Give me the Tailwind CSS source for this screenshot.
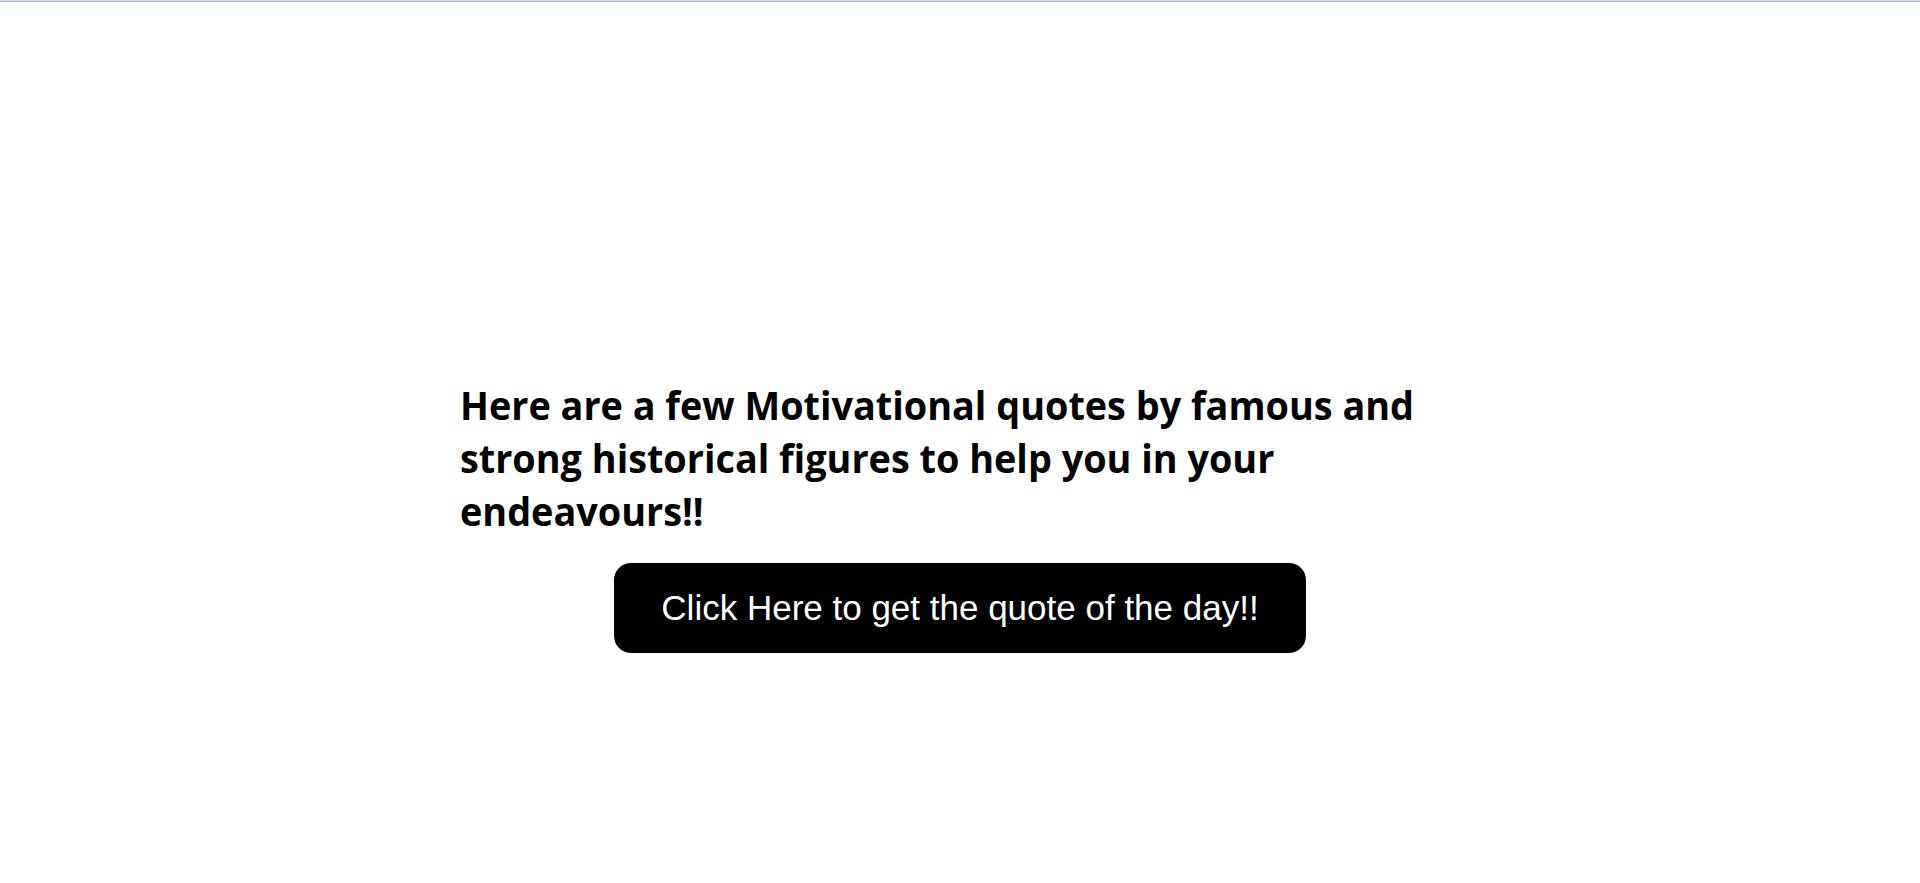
<!DOCTYPE html>
<html lang="en">
<head>
<meta charset="utf-8">
<title>Motivational Quotes</title>
<script src="https://cdn.jsdelivr.net/npm/@tailwindcss/browser@4"></script>
</head>
<body class="bg-white h-screen overflow-hidden flex flex-col items-center">
<div class="w-full h-0.5 shrink-0 border-t border-b border-t-[#c6d8f8] border-b-[#a3b1cb]"></div>
<main class="w-[1000px] pt-[376px] flex flex-col items-center">
<h1 class="w-full origin-left scale-x-[0.945] font-['Segoe_UI','Open_Sans',sans-serif] font-bold text-[40px] leading-[53px] text-black whitespace-nowrap">
<span class="block">Here are a few Motivational quotes by famous and</span>
<span class="block">strong historical figures to help you in your</span>
<span class="block">endeavours!!</span>
</h1>
<button class="mt-[26px] w-[692px] h-[90px] rounded-[17px] bg-black text-white font-['Liberation_Sans',Arial,sans-serif] text-[35px] leading-10 whitespace-nowrap">Click Here to get the quote of the day!!</button>
</main>
</body>
</html>
